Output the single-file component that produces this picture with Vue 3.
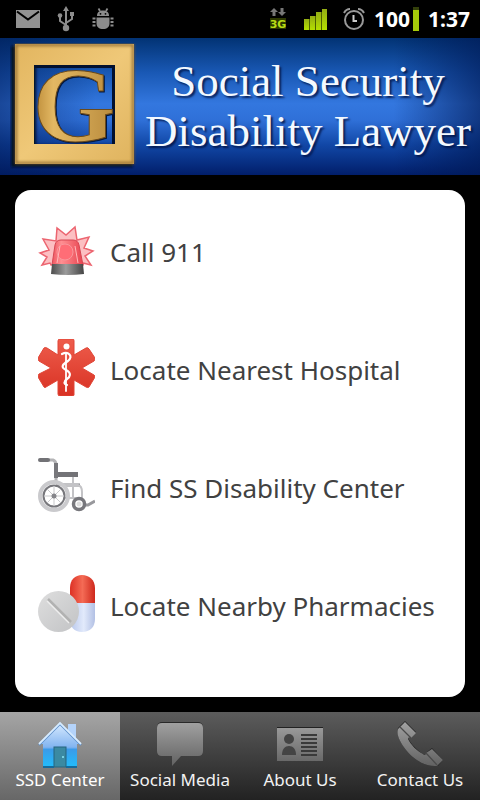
<template>
  <div class="app">
    <header class="status-bar">
      <div class="status-group status-left">
        <svg width="24" height="18" viewBox="0 0 24 18">
          <rect width="24" height="18" fill="#929292" />
          <path d="M1 1.500L12 9.500L23 1.500" fill="none" stroke="#000" stroke-width="2" />
        </svg>
        <svg width="18" height="26" viewBox="0 0 18 26">
          <g fill="none" stroke="#8c8c8c" stroke-width="2">
            <path d="M9 3V22M9 19L3 15V9M9 17L15 13V8" />
          </g>
          <g fill="#8c8c8c">
            <path d="M9 0L12 5H6Z" />
            <circle cx="9" cy="22" r="3.200" />
            <circle cx="3" cy="9.500" r="2.300" />
            <rect x="13" y="6" width="4" height="4" />
          </g>
        </svg>
        <svg width="22" height="22" viewBox="0 0 22 22">
          <g fill="#8c8c8c">
            <path d="M5 8C5 4 7.500 2.500 11 2.500S17 4 17 8Z" />
            <path d="M4.500 9.500H17.500V15C17.500 19 15 21 11 21S4.500 19 4.500 15Z" />
          </g>
          <path
            d="M6.500 0.500L8 3M15.500 0.500L14 3M0.500 10.500H3.500M0.500 14H3.500M0.500 17.500H3.500M18.500 10.500H21.500M18.500 14H21.500M18.500 17.500H21.500"
            fill="none"
            stroke="#8c8c8c"
            stroke-width="1.800"
          />
          <circle cx="8.500" cy="5.800" r="0.900" fill="#000" />
          <circle cx="13.500" cy="5.800" r="0.900" fill="#000" />
        </svg>
      </div>
      <div class="status-group status-right">
        <svg class="network" width="18" height="24" viewBox="0 0 18 24">
          <path d="M5 1L9 5H6.500V9H3.500V5H1Z" fill="#777" />
          <path d="M13 9L9 5H11.500V1H14.500V5H17Z" fill="#777" />
          <rect x="1" y="11" width="16" height="11" fill="#2c3800" />
          <text x="9" y="21" text-anchor="middle" class="network-text">3G</text>
        </svg>
        <svg class="signal" width="24" height="24" viewBox="0 0 24 24">
          <defs>
            <linearGradient id="green" x1="0" y1="0" x2="0" y2="1">
              <stop offset="0" stop-color="#93ad13" />
              <stop offset="1" stop-color="#b4df00" />
            </linearGradient>
          </defs>
          <path d="M0 23V12H6V9H12V5H18V2H23V23Z" fill="#4c6000" />
          <rect x="0" y="12" width="5" height="11" fill="url(#green)" />
          <rect x="6" y="9" width="5" height="14" fill="url(#green)" />
          <rect x="12" y="5" width="5" height="18" fill="url(#green)" />
          <rect x="18" y="2" width="5" height="21" fill="url(#green)" />
        </svg>
        <svg class="alarm" width="22" height="24" viewBox="0 0 22 24">
          <g fill="none" stroke="#999" stroke-width="2">
            <circle cx="11" cy="13" r="9" />
            <path d="M10.500 8V14H14" stroke="#ccc" />
            <path d="M1 6C2 4 4 2 7 2M21 6C20 4 18 2 15 2" />
          </g>
        </svg>
        <span class="battery-level">100</span>
        <svg class="battery" width="6" height="24" viewBox="0 0 6 24">
          <rect width="6" height="3" fill="#33400a" />
          <rect y="3" width="6" height="21" fill="#a6cb0a" />
        </svg>
        <span class="clock">1:37</span>
      </div>
    </header>

    <div class="banner">
      <svg class="logo" width="130" height="126" viewBox="0 0 130 126">
        <defs>
          <linearGradient id="gold" x1="0" y1="0" x2="1" y2="1">
            <stop offset="0" stop-color="#e2b55f" />
            <stop offset="0.500" stop-color="#efc878" />
            <stop offset="1" stop-color="#dfb35e" />
          </linearGradient>
          <linearGradient id="gold-letter" x1="0" y1="0" x2="1" y2="0">
            <stop offset="0" stop-color="#b98835" />
            <stop offset="0.250" stop-color="#e3b863" />
            <stop offset="1" stop-color="#b98b3d" />
          </linearGradient>
          <filter id="soft" x="-10%" y="-10%" width="120%" height="120%">
            <feGaussianBlur stdDeviation="1.500" />
          </filter>
        </defs>
        <path d="M1 3H123V124H1ZM26 23V102H107V23Z" fill="#000a20" filter="url(#soft)" fill-rule="evenodd" />
        <path d="M5 1H124V121H5ZM24 22V101H105V22Z" fill="url(#gold)" fill-rule="evenodd" />
        <rect x="6" y="2" width="117" height="118" fill="none" stroke="#87632a" stroke-width="2" filter="url(#soft)" />
        <path d="M24 23.500H103.500V101" fill="none" stroke="#02102e" stroke-width="3" />
        <text x="65" y="99" text-anchor="middle" class="logo-letter logo-shadow">G</text>
        <text x="64" y="98" text-anchor="middle" class="logo-letter">G</text>
      </svg>
      <h1 class="banner-title">Social Security<br />Disability Lawyer</h1>
    </div>

    <main class="content">
      <nav class="card">
        <button v-for="item in items" :key="item.id" type="button" class="row">
          <svg v-if="item.id === 'call'" class="row-icon" viewBox="0 0 57 57">
            <defs>
              <linearGradient id="siren-base" x1="0" y1="0" x2="1" y2="0">
                <stop offset="0" stop-color="#4c4c4c" />
                <stop offset="0.450" stop-color="#9c9c9c" />
                <stop offset="1" stop-color="#444" />
              </linearGradient>
              <linearGradient id="siren-dome" x1="0" y1="0" x2="1" y2="0">
                <stop offset="0" stop-color="#ee5560" />
                <stop offset="0.300" stop-color="#ff8f92" />
                <stop offset="1" stop-color="#e84450" />
              </linearGradient>
            </defs>
            <path
              d="M13 44L12 42L4 44L9 36L2 32L11 29L5 18L18 20L19 7L28 14L37 6L39 19L51 16L46 27L55 30L47 35L53 44L45 42L45 44Z"
              fill="#fcbfc2"
              stroke="#ec6570"
              stroke-width="1.500"
            />
            <path d="M14 44L17 24Q18 19 23 19H35Q40 19 41 24L45 44Z" fill="url(#siren-dome)" stroke="#d64752" />
            <circle cx="27" cy="31" r="8" fill="#ff6d76" stroke="#f9979c" />
            <path d="M19 42L22 25M40 42L37 25" stroke="#ffb9ba" fill="none" />
            <path d="M14 43H45L46 53Q30 55 13 53Z" fill="url(#siren-base)" />
          </svg>
          <svg v-else-if="item.id === 'hospital'" class="row-icon" viewBox="0 0 57 57">
            <defs>
              <linearGradient id="star" x1="0" y1="0" x2="0" y2="1">
                <stop offset="0" stop-color="#ee5d4c" />
                <stop offset="1" stop-color="#d83123" />
              </linearGradient>
            </defs>
            <path
              d="M22 0H35Q36 0 36 2V16L48 9Q50 8 51 10L57 19Q57 21 56 22L44 29L56 36Q57 37 57 38L51 48Q50 49 48 48L36 41V56Q36 57 34 57H22Q20 57 20 55V41L8 48Q7 49 6 48L0 38Q0 36 1 35L13 29L1 22Q0 21 0 19L6 9Q7 8 9 9L20 16V2Q20 0 22 0Z"
              fill="url(#star)"
              stroke="#e04536"
            />
            <g fill="none" stroke="#fff" stroke-linecap="round">
              <path d="M28 14V52" stroke-width="1.800" />
              <path d="M24 15C30 12 36 17 30 22C25 25 22 28 28 31C34 34 32 38 29 40C25 43 26 45 29 46" stroke-width="2.200" />
            </g>
            <circle cx="28.500" cy="7.500" r="3" fill="#fff" />
          </svg>
          <svg v-else-if="item.id === 'center'" class="row-icon" viewBox="0 0 57 57">
            <g fill="none">
              <path d="M11 3H15Q18 4 18 8V24" stroke="#b4b4b6" stroke-width="3" />
              <path d="M2 3H10" stroke="#727276" stroke-width="4" stroke-linecap="round" />
              <path d="M18 6V21" stroke="#77777b" stroke-width="4" />
              <path d="M20 17.500H40" stroke="#737377" stroke-width="5" />
              <path d="M25 28H42" stroke="#85858a" stroke-width="3" />
              <path d="M35 20V42M18 28H40Q44 29 44 35V43M26 41H38" stroke="#c3c3c6" stroke-width="2" />
              <path d="M46 48H50L57 44" stroke="#98989c" stroke-width="3" />
              <circle cx="16" cy="39" r="14" stroke="#cacacd" stroke-width="4" />
              <circle cx="16" cy="39" r="10.500" stroke="#77777c" stroke-width="2" />
              <path d="M16 29V49M6 39H26M9 32L23 46M23 32L9 46" stroke="#c9c9cc" />
              <circle cx="41" cy="47" r="5.500" stroke="#77777c" stroke-width="3.500" />
            </g>
            <circle cx="16" cy="39" r="2.500" fill="#85858a" />
            <circle cx="41" cy="47" r="2.500" fill="#ddd" />
          </svg>
          <svg v-else class="row-icon" viewBox="0 0 57 57">
            <defs>
              <linearGradient id="capsule-red" x1="0" y1="0" x2="1" y2="0">
                <stop offset="0" stop-color="#dd3125" />
                <stop offset="0.500" stop-color="#f46b55" />
                <stop offset="1" stop-color="#ce281c" />
              </linearGradient>
              <linearGradient id="capsule-blue" x1="0" y1="0" x2="1" y2="0">
                <stop offset="0" stop-color="#b7c6eb" />
                <stop offset="0.550" stop-color="#e2eafb" />
                <stop offset="1" stop-color="#b2c0e4" />
              </linearGradient>
              <linearGradient id="tablet" x1="0" y1="0" x2="1" y2="1">
                <stop offset="0" stop-color="#dedede" />
                <stop offset="1" stop-color="#c2c3c5" />
              </linearGradient>
            </defs>
            <path d="M32 28V13C32 5 37 0 44 0S57 5 57 13V28Z" fill="url(#capsule-red)" />
            <path d="M32 28H57V44C57 52 52 57 44 57S32 52 32 44Z" fill="url(#capsule-blue)" />
            <circle cx="20.500" cy="36.500" r="20.500" fill="url(#tablet)" />
            <path d="M10 24L33 47" stroke="#b2b2b2" stroke-width="2.500" />
            <path d="M9 26L31 48" stroke="#eee" stroke-width="1.200" />
          </svg>
          <span class="row-label">{{ item.label }}</span>
        </button>
      </nav>
    </main>

    <nav class="tabs">
      <button
        v-for="tab in tabs"
        :key="tab.id"
        type="button"
        class="tab"
        :class="{ active: activeTab === tab.id }"
        @click="activeTab = tab.id"
      >
        <svg v-if="tab.id === 'ssd'" class="tab-icon" viewBox="0 0 48 48">
          <defs>
            <linearGradient id="house" x1="0" y1="0" x2="0" y2="1">
              <stop offset="0" stop-color="#d9ebff" />
              <stop offset="0.550" stop-color="#82b4f0" />
              <stop offset="0.600" stop-color="#3b9be9" />
              <stop offset="1" stop-color="#22bdfb" />
            </linearGradient>
          </defs>
          <path d="M32 4H40V20H32Z" fill="#b4d3fa" />
          <path d="M24 3L45 24H41V47H7V24H3Z" fill="url(#house)" />
          <path d="M3 25L24 4L45 25" fill="none" stroke="#5b8ec9" stroke-width="2" />
          <path d="M3 24L24 3L45 24" fill="none" stroke="#d6ebff" stroke-width="1.800" />
          <rect x="18" y="27" width="12" height="20" fill="#3b8aa2" stroke="#27657f" />
          <circle cx="27" cy="37" r="1" fill="#8ee7f6" />
          <path d="M7 47H18M30 47H41" stroke="#176b9b" stroke-width="2" />
        </svg>
        <svg v-else-if="tab.id === 'social'" class="tab-icon" viewBox="0 0 48 48">
          <defs>
            <linearGradient id="gray" gradientUnits="userSpaceOnUse" x1="0" y1="3" x2="0" y2="46">
              <stop offset="0" stop-color="#a0a0a0" />
              <stop offset="1" stop-color="#626262" />
            </linearGradient>
          </defs>
          <rect x="1" y="2" width="46" height="20" rx="5" fill="#292929" />
          <path d="M6 3H42Q47 3 47 8V31Q47 36 42 36H25L16 46V36H6Q1 36 1 31V8Q1 3 6 3Z" fill="url(#gray)" />
        </svg>
        <svg v-else-if="tab.id === 'about'" class="tab-icon" viewBox="0 0 48 48">
          <rect x="1" y="7" width="46" height="10" fill="#222" />
          <rect x="1" y="8" width="46" height="33" fill="url(#gray)" />
          <g fill="#444">
            <circle cx="13" cy="19" r="5" />
            <path d="M6 35C6 29 9 26 13 26S20 29 20 35Z" />
          </g>
          <path d="M25 15H41M25 19H41M25 23H41M25 27H41M25 31H41M25 35H41" stroke="#3a3a3a" stroke-width="2" />
        </svg>
        <svg v-else class="tab-icon" viewBox="0 0 48 48">
          <path d="M2 8L9 1L20 12L15 17C14 16 12 16 12 18C15 24 21 30 27 34C29 35 30 34 31 32L36 28L47 40L42 46C30 47 18 40 10 30C4 22 0 14 2 8Z" fill="#222" />
          <path d="M2 9L9 2L20 13L15 18C14 17 12 17 12 19C15 25 21 31 27 34C29 36 30 34 30 33L36 29L47 40L41 46C30 47 18 40 10 30C4 22 0 14 2 9Z" fill="url(#gray)" />
          <path d="M4 7L15 18M30 33L41 45" stroke="#4a4a4a" stroke-width="1.300" />
        </svg>
        <span class="tab-label">{{ tab.label }}</span>
      </button>
    </nav>
  </div>
</template>

<script setup>
import { ref } from 'vue';

const activeTab = ref('ssd');

const items = [
  { id: 'call', label: 'Call 911' },
  { id: 'hospital', label: 'Locate Nearest Hospital' },
  { id: 'center', label: 'Find SS Disability Center' },
  { id: 'pharmacy', label: 'Locate Nearby Pharmacies' }
];

const tabs = [
  { id: 'ssd', label: 'SSD Center' },
  { id: 'social', label: 'Social Media' },
  { id: 'about', label: 'About Us' },
  { id: 'contact', label: 'Contact Us' }
];
</script>

<style>
body {
  margin: 0;
  background: #000;
}
</style>

<style scoped>
.app {
  min-height: 100vh;
  display: flex;
  flex-direction: column;
  background: #000;
  font-family: 'Noto Sans', 'Open Sans', sans-serif;
}

button {
  margin: 0;
  padding: 0;
  border: none;
  background: none;
  font-family: inherit;
  cursor: pointer;
}

svg {
  flex-shrink: 0;
}

.status-bar {
  height: 38px;
  box-sizing: border-box;
  padding: 0 10px 0 16px;
  display: flex;
  align-items: center;
  justify-content: space-between;
  color: #fff;
  font-size: 21px;
  font-weight: 700;
  line-height: 38px;
}

.status-group {
  display: flex;
  align-items: center;
}

.status-left {
  gap: 17px;
}

.network {
  margin-right: 17px;
}

.network-text {
  font-family: 'DejaVu Sans', sans-serif;
  font-size: 11px;
  font-weight: 700;
  fill: #b9dd15;
}

.signal {
  margin-right: 15px;
}

.alarm {
  margin-right: 9px;
}

.battery {
  margin: 0 9px 0 3px;
}

.banner {
  display: flex;
  align-items: center;
  padding: 5px 8px 6px 10px;
  background:
    linear-gradient(90deg, rgba(0, 25, 85, 0.5) 0%, transparent 20%, transparent 82%, rgba(0, 25, 85, 0.65) 100%),
    linear-gradient(180deg, #023374 0%, #1958b4 25%, #3377df 48%, #2f70d8 60%, #1147a6 78%, #011e6a 100%);
}

.logo {
  display: block;
}

.logo-letter {
  font-family: 'Liberation Serif', serif;
  font-size: 106px;
  font-weight: 700;
  fill: url(#gold-letter);
  stroke: #6b4a1b;
  stroke-width: 1px;
}

.logo-shadow {
  fill: #04183f;
  stroke: #04183f;
}

.banner-title {
  flex: 1;
  margin: 0;
  padding-left: 4px;
  color: #f4f9ff;
  font-family: Georgia, 'Liberation Serif', serif;
  font-size: 45px;
  font-weight: 400;
  line-height: 50px;
  text-align: center;
  white-space: nowrap;
  text-shadow: 2px 2px 2px rgba(0, 15, 60, 0.8);
}

.content {
  flex: 1;
  display: flex;
  padding: 15px;
}

.card {
  flex: 1;
  min-width: 0;
  background: #fff;
  border-radius: 16px;
}

.row {
  width: 100%;
  height: 118px;
  padding: 0 20px 0 23px;
  display: flex;
  align-items: center;
  gap: 15px;
  text-align: left;
}

.row-icon {
  width: 57px;
  height: 57px;
}

.row-label {
  padding-top: 6px;
  color: #414141;
  font-size: 26px;
  line-height: 36px;
  white-space: nowrap;
}

.tabs {
  display: grid;
  grid-template-columns: repeat(4, 1fr);
  background: linear-gradient(180deg, #5c5c5c 0%, #222 100%);
}

.tab {
  height: 88px;
  padding-top: 8px;
  display: flex;
  flex-direction: column;
  align-items: center;
  justify-content: flex-start;
  color: #f2f2f2;
}

.tab.active {
  background: linear-gradient(180deg, #a5a5a5 0%, #676767 100%);
  color: #fff;
}

.tab-icon {
  width: 48px;
  height: 48px;
}

.tab-label {
  font-size: 17px;
  line-height: 24px;
  white-space: nowrap;
}
</style>
